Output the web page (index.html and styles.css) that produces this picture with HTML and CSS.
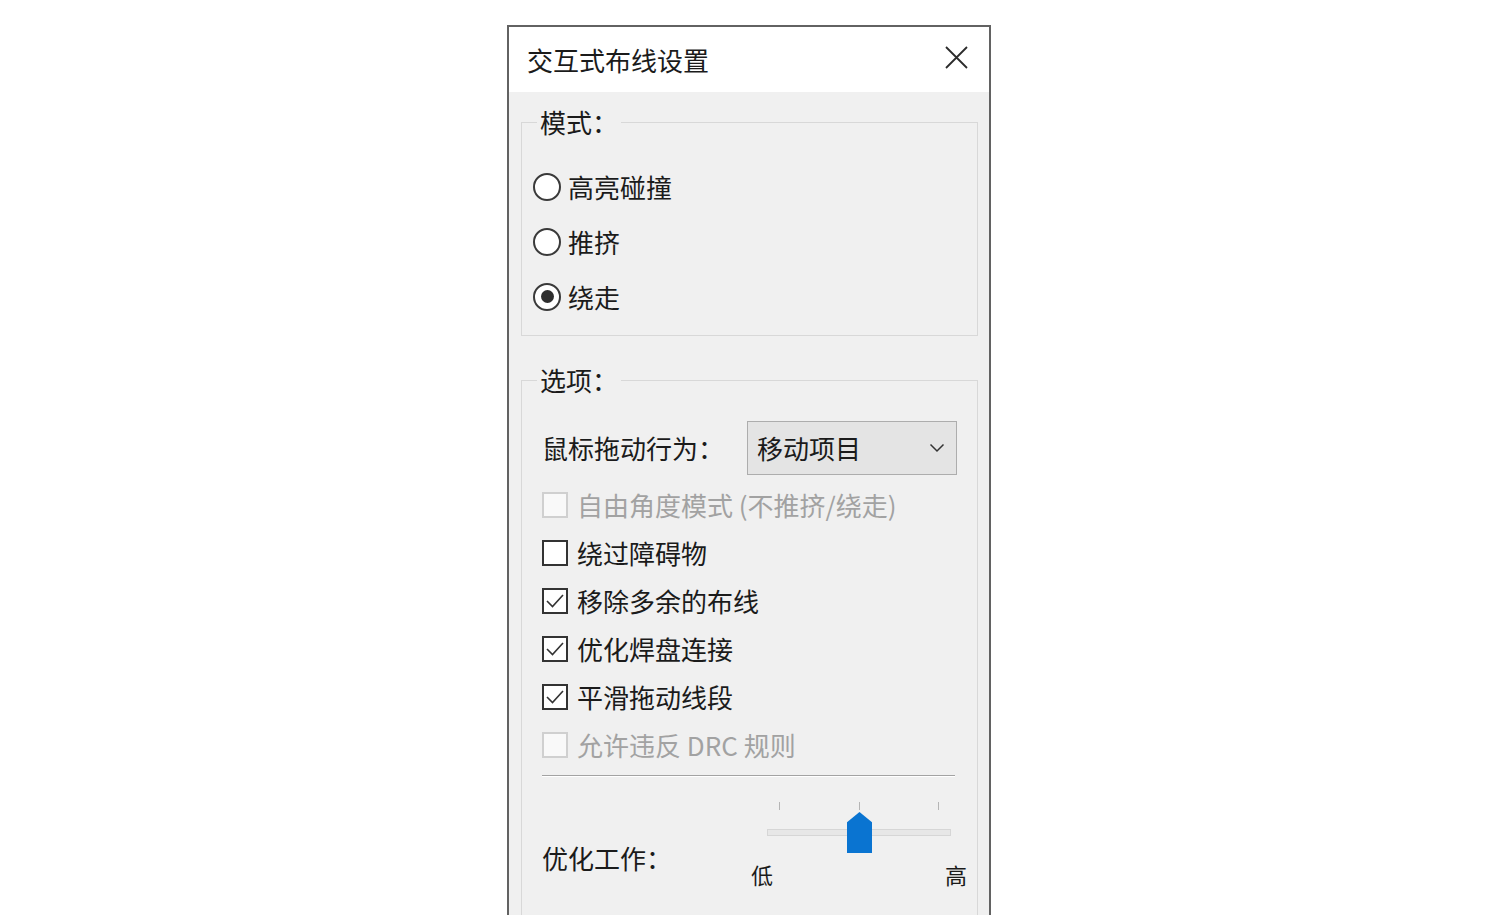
FILE: index.html
```html
<!DOCTYPE html>
<html lang="zh-CN">
<head>
<meta charset="utf-8">
<title>交互式布线设置</title>
<link rel="stylesheet" href="styles.css">
</head>
<body>
<div class="dialog">
  <div class="titlebar">
    <span class="title">交互式布线设置</span>
    <button class="close" aria-label="关闭">
      <svg viewBox="0 0 23 23" width="23" height="23"><path d="M1 1L22 22M22 1L1 22" stroke="#2b2b2b" stroke-width="1.8" fill="none"/></svg>
    </button>
  </div>
  <div class="content">
    <fieldset class="group group-mode">
      <legend>模式：</legend>
      <div class="radio-list">
        <label class="radio-row"><span class="radio"></span><span>高亮碰撞</span></label>
        <label class="radio-row"><span class="radio"></span><span>推挤</span></label>
        <label class="radio-row"><span class="radio checked"></span><span>绕走</span></label>
      </div>
    </fieldset>
    <fieldset class="group group-options">
      <legend>选项：</legend>
      <div class="select-row">
        <span class="field-label">鼠标拖动行为：</span>
        <div class="select">
          <span>移动项目</span>
          <svg class="chevron" viewBox="0 0 16 10" width="16" height="10"><polyline points="1.5,1.5 8,8 14.5,1.5" stroke="#333" stroke-width="1.5" fill="none"/></svg>
        </div>
      </div>
      <div class="check-list">
        <div class="check-row disabled"><span class="box"></span><span>自由角度模式 (不推挤/绕走)</span></div>
        <div class="check-row"><span class="box"></span><span>绕过障碍物</span></div>
        <div class="check-row"><span class="box"><svg viewBox="0 0 22 22" width="22" height="22"><polyline points="3,11 8.5,16.5 19,5" stroke="#333" stroke-width="1.6" fill="none"/></svg></span><span>移除多余的布线</span></div>
        <div class="check-row"><span class="box"><svg viewBox="0 0 22 22" width="22" height="22"><polyline points="3,11 8.5,16.5 19,5" stroke="#333" stroke-width="1.6" fill="none"/></svg></span><span>优化焊盘连接</span></div>
        <div class="check-row"><span class="box"><svg viewBox="0 0 22 22" width="22" height="22"><polyline points="3,11 8.5,16.5 19,5" stroke="#333" stroke-width="1.6" fill="none"/></svg></span><span>平滑拖动线段</span></div>
        <div class="check-row disabled"><span class="box"></span><span>允许违反 DRC 规则</span></div>
      </div>
      <div class="separator"></div>
      <div class="slider-row">
        <span class="field-label effort-label">优化工作：</span>
        <div class="slider">
          <div class="ticks"><i></i><i></i><i></i></div>
          <div class="track-area">
            <div class="track"></div>
            <div class="thumb"></div>
          </div>
          <div class="slider-labels"><span>低</span><span>高</span></div>
        </div>
      </div>
    </fieldset>
  </div>
</div>
</body>
</html>
```

FILE: styles.css
```css
html, body {
  margin: 0;
  padding: 0;
  overflow: hidden;
  background: #ffffff;
}

body {
  font-family: "Noto Sans CJK SC", "Noto Sans", sans-serif;
  font-size: 26px;
  line-height: 26px;
  color: #1b1b1b;
}

.dialog {
  margin: 25px 0 0 507px;
  width: 480px;
  height: 910px;
  border: 2px solid #626262;
  border-bottom: none;
  background: #f0f0f0;
  overflow: hidden;
}

.titlebar {
  height: 65px;
  background: #ffffff;
  display: flex;
  align-items: center;
  justify-content: space-between;
  padding: 0 21px 0 18px;
}

.title {
  font-size: 26px;
  line-height: 26px;
}

.close {
  border: none;
  background: transparent;
  padding: 0;
  width: 23px;
  height: 23px;
  margin-bottom: 4px;
  display: flex;
}

.content {
  padding-top: 17px;
}

.group {
  margin: 0 11px 0 12px;
  padding: 0;
  border: 1px solid #d8d8d8;
  min-width: 0;
}

.group legend {
  margin-left: 15px;
  padding: 0 3px;
  font-size: 26px;
  line-height: 26px;
}

.radio-list {
  padding: 24px 0 11px 11px;
}

.radio-row {
  height: 55px;
  display: flex;
  align-items: center;
  gap: 7px;
}

.radio {
  width: 28px;
  height: 28px;
  box-sizing: border-box;
  border: 2px solid #3a3a3a;
  border-radius: 50%;
  background: #ffffff;
  display: flex;
  align-items: center;
  justify-content: center;
}

.radio.checked::after {
  content: "";
  width: 13px;
  height: 13px;
  border-radius: 50%;
  background: #2e2e2e;
}

.group-options {
  margin-top: 31px;
  padding-bottom: 40px;
}

.select-row {
  padding: 28px 20px 0 20px;
  display: flex;
  align-items: center;
  justify-content: space-between;
}

.select {
  width: 210px;
  height: 54px;
  box-sizing: border-box;
  border: 1px solid #adadad;
  background: #e4e4e4;
  display: flex;
  align-items: center;
  justify-content: space-between;
  padding: 0 11px 0 9px;
}

.chevron {
  display: block;
}

.check-list {
  margin-top: 6px;
  padding-left: 20px;
}

.check-row {
  height: 48px;
  display: flex;
  align-items: center;
  gap: 9px;
}

.box {
  width: 26px;
  height: 26px;
  box-sizing: border-box;
  border: 2px solid #333333;
  background: #ffffff;
  display: flex;
  align-items: center;
  justify-content: center;
}

.box svg {
  display: block;
}

.check-row.disabled {
  color: #a2a2a2;
}

.check-row.disabled .box {
  border-color: #d0d0d0;
  background: #f9f9f9;
}

.separator {
  margin: 6px 22px 0 20px;
  border-top: 1px solid #a3a3a3;
  border-bottom: 1px solid #ffffff;
}

.slider-row {
  display: flex;
  align-items: flex-start;
  padding-left: 20px;
}

.effort-label {
  margin-top: 68px;
}

.slider {
  margin-left: auto;
  margin-right: 10px;
  width: 216px;
}

.ticks {
  margin: 25px 28px 0 28px;
  height: 8px;
  display: flex;
  justify-content: space-between;
}

.ticks i {
  width: 1px;
  height: 8px;
  background: #b5b5b5;
}

.track-area {
  position: relative;
  margin: 2px 16px 0 16px;
  height: 41px;
  display: flex;
  align-items: center;
}

.track {
  width: 100%;
  height: 7px;
  box-sizing: border-box;
  border: 1px solid #d6d6d6;
  background: #e7e7e7;
}

.thumb {
  position: absolute;
  top: 0;
  left: calc(50% - 12px);
  width: 25px;
  height: 41px;
  background: #0a74d1;
  clip-path: polygon(50% 0, 100% 25%, 100% 100%, 0 100%, 0 25%);
}

.slider-labels {
  margin-top: 8px;
  display: flex;
  justify-content: space-between;
  font-size: 22px;
  line-height: 26px;
}
```
